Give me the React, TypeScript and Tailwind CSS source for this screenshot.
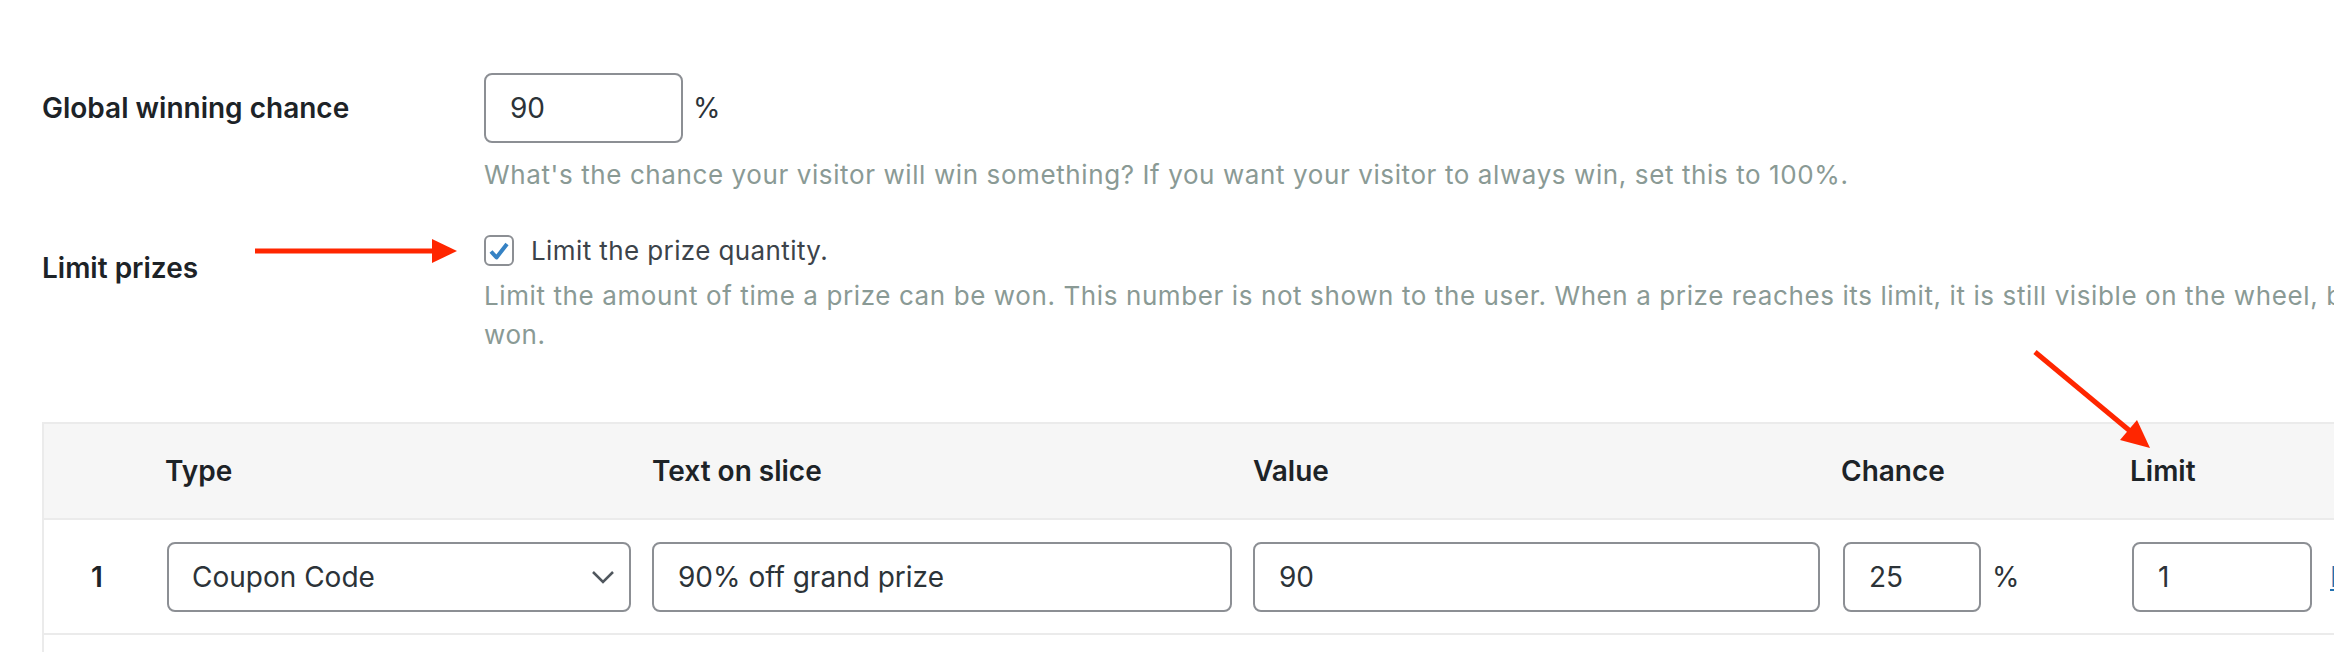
import React from 'react'

const cols = 'grid grid-cols-[121px_487px_601px_588px_289px_1fr]'

const TextInput = ({ value, className }: { value: string; className: string }) => (
  <input
    type="text"
    readOnly
    value={value}
    className={`h-[70px] shrink-0 rounded-[8px] border-2 border-[#8c8f94] bg-white px-[24px] text-[28px] text-[#2c3338] outline-none ${className}`}
  />
)

export default function App() {
  return (
    <div className="relative h-[652px] w-full overflow-hidden bg-white font-[Inter,sans-serif]">
      <div className="pl-[42px] pt-[73px]">
        {/* Global winning chance */}
        <div className="flex">
          <div className="flex h-[70px] w-[442px] shrink-0 items-center text-[28px] font-semibold text-[#1d2327]">
            Global winning chance
          </div>
          <div>
            <div className="flex items-center">
              <TextInput value="90" className="w-[199px]" />
              <span className="ml-[10px] text-[28px] text-[#2c3338]">%</span>
            </div>
            <p className="mt-[12px] whitespace-nowrap text-[26px] leading-[39px] tracking-[0.6px] text-[#8a9a95]">
              What's the chance your visitor will win something? If you want your visitor to always win, set this to 100%.
            </p>
          </div>
        </div>

        {/* Limit prizes */}
        <div className="mt-[37px] flex">
          <div className="w-[442px] shrink-0 pt-[18px] text-[28px] font-semibold leading-[39px] text-[#1d2327]">
            Limit prizes
          </div>
          <div>
            <label className="flex h-[39px] items-center">
              <span className="flex h-[31px] w-[30px] items-center justify-center rounded-[6px] border-2 border-[#8c8f94] bg-white">
                <svg width="22" height="20" viewBox="0 0 22 20">
                  <path d="M3 10.5 L8.5 16.5 L19 3" fill="none" stroke="#3582c4" strokeWidth="4" strokeLinejoin="round" />
                </svg>
              </span>
              <span className="ml-[17px] text-[26px] tracking-[0.4px] text-[#3c434a]">Limit the prize quantity.</span>
            </label>
            <p className="mt-[6px] whitespace-nowrap text-[26px] leading-[39px] tracking-[0.6px] text-[#8a9a95]">
              Limit the amount of time a prize can be won. This number is not shown to the user. When a prize reaches its limit, it is still visible on the wheel, but it can no longer be
              <br />
              won.
            </p>
          </div>
        </div>

        {/* Prizes table */}
        <div className="mt-[68px] border-l-2 border-t-2 border-[#ebebeb]">
          <div className={`${cols} h-[96px] items-center border-b-2 border-[#ebebeb] bg-[#f6f6f6] text-[28px] font-semibold text-[#1d2327]`}>
            <div />
            <div>Type</div>
            <div>Text on slice</div>
            <div>Value</div>
            <div>Chance</div>
            <div>Limit</div>
          </div>
          <div className={`${cols} h-[115px] items-center border-b-2 border-[#ebebeb] text-[28px]`}>
            <div className="pl-[47px] font-semibold text-[#1d2327]">1</div>
            <div className="pl-[2px]">
              <div className="flex h-[70px] w-[464px] items-center justify-between rounded-[8px] border-2 border-[#8c8f94] bg-white pl-[23px] pr-[14px] text-[#2c3338]">
                <span>Coupon Code</span>
                <svg width="24" height="14" viewBox="0 0 24 14">
                  <path d="M2 2 L12 12 L22 2" fill="none" stroke="#50575e" strokeWidth="2.5" />
                </svg>
              </div>
            </div>
            <div>
              <TextInput value="90% off grand prize" className="w-[580px]" />
            </div>
            <div>
              <TextInput value="90" className="w-[567px]" />
            </div>
            <div className="flex items-center pl-[2px]">
              <TextInput value="25" className="w-[138px]" />
              <span className="ml-[11px] text-[#2c3338]">%</span>
            </div>
            <div className="flex items-center pl-[2px]">
              <TextInput value="1" className="w-[180px]" />
              <a className="ml-[18px] whitespace-nowrap text-[#2271b1] underline">Delete</a>
            </div>
          </div>
          <div className="h-[20px]" />
        </div>
      </div>

      {/* annotation arrows */}
      <svg className="pointer-events-none absolute left-0 top-0" width="2334" height="652">
        <line x1="255" y1="251" x2="435" y2="251" stroke="#ff2600" strokeWidth="5" />
        <polygon points="432,239 457,251 432,263" fill="#ff2600" />
        <line x1="2035" y1="352" x2="2130" y2="431" stroke="#ff2600" strokeWidth="5" />
        <polygon points="2150,448 2120,440 2137,420" fill="#ff2600" />
      </svg>
    </div>
  )
}
